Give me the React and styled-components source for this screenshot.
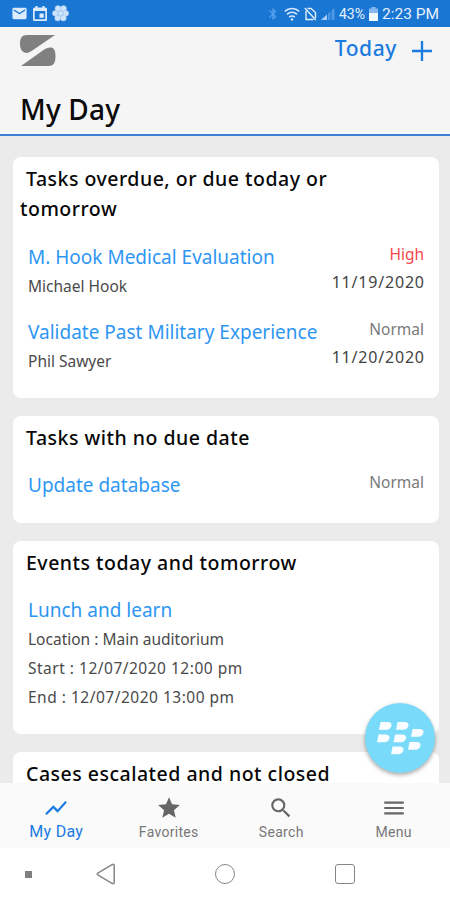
import styled, { createGlobalStyle } from "styled-components";
import {
  MdBluetooth,
  MdEmail,
  MdMenu,
  MdSearch,
  MdShowChart,
  MdStar,
} from "react-icons/md";

const cards = [
  {
    title: "Tasks overdue, or due today or tomorrow",
    items: [
      {
        name: "M. Hook Medical Evaluation",
        lines: ["Michael Hook"],
        priority: "High",
        date: "11/19/2020",
      },
      {
        name: "Validate Past Military Experience",
        lines: ["Phil Sawyer"],
        priority: "Normal",
        date: "11/20/2020",
      },
    ],
  },
  {
    title: "Tasks with no due date",
    items: [{ name: "Update database", lines: [], priority: "Normal" }],
  },
  {
    title: "Events today and tomorrow",
    items: [
      {
        name: "Lunch and learn",
        lines: [
          "Location : Main auditorium",
          "Start : 12/07/2020 12:00 pm",
          "End : 12/07/2020 13:00 pm",
        ],
      },
    ],
  },
  { title: "Cases escalated and not closed", items: [] },
];

const tabs = [
  { label: "My Day", icon: MdShowChart, active: true },
  { label: "Favorites", icon: MdStar },
  { label: "Search", icon: MdSearch },
  { label: "Menu", icon: MdMenu },
];

const CalendarIcon = () => (
  <svg width="14" height="15" viewBox="0 0 14 15">
    <path
      fillRule="evenodd"
      fill="#dcecff"
      d="M2.5 0h2v1.5h5V0h2v1.5h1A1.5 1.5 0 0 1 14 3v10.5a1.5 1.5 0 0 1-1.5 1.5h-11A1.5 1.5 0 0 1 0 13.5V3a1.5 1.5 0 0 1 1.5-1.5h1zM1.7 5v8.3h10.6V5zM6.5 7.5h4.3v4.3H6.5z"
    />
  </svg>
);

const FlowerIcon = () => (
  <svg width="17" height="17" viewBox="0 0 17 17">
    <g fill="#cfe4fb" stroke="#9cc6f4" strokeWidth="0.5">
      <circle cx="6" cy="3.6" r="3" />
      <circle cx="11.5" cy="3.6" r="3" />
      <circle cx="13.8" cy="8.3" r="2.9" />
      <circle cx="11.3" cy="13" r="3" />
      <circle cx="5.7" cy="13" r="3" />
      <circle cx="3.2" cy="8.3" r="2.8" />
      <circle cx="8.5" cy="8.3" r="2.6" />
    </g>
  </svg>
);

const WifiIcon = () => (
  <svg width="16" height="14" viewBox="0 0 16 14" fill="none" stroke="#d5e7fc">
    <g strokeWidth="1.6">
      <path d="M.8 4.3a10.5 10.5 0 0 1 14.4 0" />
      <path d="M3 7.3a7.3 7.3 0 0 1 10 0" />
      <path d="M5.2 10.2a4 4 0 0 1 5.6 0" />
    </g>
    <circle cx="8" cy="12.5" r="1.2" fill="#d5e7fc" stroke="none" />
  </svg>
);

const NoSimIcon = () => (
  <svg width="13" height="14" viewBox="0 0 13 14" fill="none" stroke="#e2effd">
    <path d="M3.5 1.5H7l4.5 4V11M9.5 12.5H2V4" strokeWidth="1.4" />
    <path d="M.8 1l11 12" strokeWidth="1.4" />
  </svg>
);

const SignalIcon = () => (
  <svg width="14" height="13" viewBox="0 0 14 13">
    <path d="M0 13l6-5.5V13z" fill="#a9cdf5" />
    <path d="M7 13V6.5l2.3-2V13zM10.5 13V3.5l3-2.5v12z" fill="#4c97e6" />
  </svg>
);

const BatteryIcon = () => (
  <svg width="9" height="14" viewBox="0 0 9 14">
    <path d="M2.5 0h4v1.5H9V14H0V1.5h2.5z" fill="#86b8f0" />
    <path d="M0 6h9v8H0z" fill="#f2f8ff" />
  </svg>
);

const LogoIcon = () => (
  <svg width="36" height="31" viewBox="0 0 36 31" fill="#808080">
    <path d="M7 0h28L12 15.8C9.5 17.5 7 18.5 4.5 17.5 1.5 16.5 0 13 0 9 0 3 2 0 7 0z" />
    <path d="M1 31l22.5-16c2.5-1.8 6-3.3 8.5-2.3 3 1 3.5 4.8 3.5 8.3 0 7-2 10-7 10z" />
  </svg>
);

const BerryIcon = () => (
  <svg width="48" height="34" viewBox="0 0 48 34">
    <defs>
      <path
        id="berry"
        d="M1.6 0h7.2C11.3 0 12.8 1.5 12.5 3.5 12.2 6 10 7.8 7.4 7.8H0z"
      />
    </defs>
    <g fill="#fafdff">
      <use href="#berry" x="3" y="1" />
      <use href="#berry" x="20" y="1" />
      <use href="#berry" x="1" y="13.5" />
      <use href="#berry" x="17.5" y="13.5" />
      <use href="#berry" x="35" y="8" />
      <use href="#berry" x="32" y="21" />
      <use href="#berry" x="15" y="25.5" />
    </g>
  </svg>
);

const App = () => (
  <Screen>
    <GlobalStyle />
    <StatusBar>
      <StatusGroup $gap={5}>
        <MdEmail size={17} color="#dcecff" />
        <CalendarIcon />
        <FlowerIcon />
      </StatusGroup>
      <StatusGroup $gap={4}>
        <MdBluetooth size={14} color="#5ca3ee" />
        <WifiIcon />
        <NoSimIcon />
        <SignalIcon />
        <Percent>43%</Percent>
        <BatteryIcon />
        <Clock>2:23 PM</Clock>
      </StatusGroup>
    </StatusBar>
    <Header>
      <HeaderTop>
        <LogoIcon />
        <Actions>
          <TodayButton>Today</TodayButton>
          <AddButton aria-label="Add">
            <svg width="22" height="22" viewBox="0 0 22 22">
              <path d="M11 1v20M1 11h20" stroke="#1a7be0" strokeWidth="2.3" />
            </svg>
          </AddButton>
        </Actions>
      </HeaderTop>
      <PageTitle>My Day</PageTitle>
    </Header>
    <Content>
      {cards.map((card) => (
        <Card key={card.title}>
          <CardTitle>{card.title}</CardTitle>
          <ItemList>
            {card.items.map((item) => (
              <Item key={item.name}>
                <Details>
                  <ItemLink>{item.name}</ItemLink>
                  {item.lines.map((line) => (
                    <Line key={line} $numeric={/\d/.test(line)}>
                      {line}
                    </Line>
                  ))}
                </Details>
                <Meta>
                  {item.priority && (
                    <Priority $high={item.priority === "High"}>
                      {item.priority}
                    </Priority>
                  )}
                  {item.date && <DueDate>{item.date}</DueDate>}
                </Meta>
              </Item>
            ))}
          </ItemList>
        </Card>
      ))}
      <Fab aria-label="Launcher">
        <BerryIcon />
      </Fab>
    </Content>
    <TabBar>
      {tabs.map(({ label, icon: Icon, active }) => (
        <Tab key={label} $active={active}>
          <Icon size={26} />
          <TabLabel $active={active}>{label}</TabLabel>
        </Tab>
      ))}
    </TabBar>
    <SystemNav>
      <Dot />
      <svg width="20" height="22" viewBox="0 0 20 22">
        <path
          d="M1.8 10.2L16 1.7q2.2-1 2.2 1v16.6q0 2-2.2 1L1.8 11.8q-1.2-.8 0-1.6z"
          fill="none"
          stroke="#858585"
          strokeWidth="1.5"
        />
      </svg>
      <HomeCircle />
      <RecentSquare />
    </SystemNav>
  </Screen>
);

const GlobalStyle = createGlobalStyle`
  * {
    box-sizing: border-box;
  }

  body {
    margin: 0;
    font-family: "Noto Sans", "Open Sans", sans-serif;
  }

  svg {
    display: block;
    flex-shrink: 0;
  }

  button {
    border: 0;
    padding: 0;
    background: none;
    font-family: inherit;
  }
`;

const Screen = styled.div`
  display: flex;
  flex-direction: column;
  width: 450px;
  height: 900px;
  overflow: hidden;
  background: #ebebeb;
`;

const StatusBar = styled.div`
  display: flex;
  flex-shrink: 0;
  justify-content: space-between;
  align-items: center;
  height: 27px;
  padding: 0 11px;
  background: #1976d2;
  color: #e6f1fd;
  font-family: Roboto, sans-serif;
`;

const StatusGroup = styled.div`
  display: flex;
  align-items: center;
  gap: ${(props) => props.$gap}px;
`;

const Percent = styled.span`
  font-size: 14px;
`;

const Clock = styled.span`
  font-size: 15.5px;
`;

const Header = styled.header`
  flex-shrink: 0;
  height: 109px;
  padding: 8px 17px 0 20px;
  background: #f5f5f5;
  border-bottom: 2px solid #3c7fd6;
`;

const HeaderTop = styled.div`
  display: flex;
  justify-content: space-between;
  height: 48px;
`;

const Actions = styled.div`
  display: flex;
  align-items: flex-start;
  gap: 14px;
`;

const TodayButton = styled.button`
  color: #1a7be0;
  font-size: 21px;
  font-weight: 500;
  letter-spacing: 0.6px;
  line-height: 26px;
`;

const AddButton = styled.button`
  padding-top: 5px;
`;

const PageTitle = styled.h1`
  margin: 0;
  color: #0a0a0a;
  font-size: 28px;
  font-weight: 500;
  letter-spacing: 0.2px;
  line-height: 52px;
`;

const Content = styled.main`
  position: relative;
  display: flex;
  flex: 1;
  flex-direction: column;
  gap: 18px;
  min-height: 0;
  padding: 21px 11px 0 13px;
  overflow: hidden;
`;

const Card = styled.section`
  flex-shrink: 0;
  padding: 7px 15px 22.4px 7px;
  border-radius: 8px;
  background: #fff;
`;

const CardTitle = styled.h2`
  margin: 0;
  padding-right: 60px;
  color: #080808;
  font-size: 19.5px;
  font-weight: 500;
  letter-spacing: 0.5px;
  line-height: 30px;
  text-indent: 6px;
`;

const ItemList = styled.div`
  display: flex;
  flex-direction: column;
  gap: 16.3px;
  padding: 17.6px 0 0 8px;
`;

const Item = styled.div`
  display: flex;
  justify-content: space-between;
`;

const Details = styled.div`
  display: flex;
  flex-direction: column;
`;

const ItemLink = styled.a`
  color: #2e96f3;
  font-size: 19px;
  line-height: 30px;
  white-space: nowrap;
`;

const Line = styled.span`
  color: #4a4a4a;
  font-size: 15.5px;
  letter-spacing: ${(props) => (props.$numeric ? 0.5 : 0)}px;
  line-height: 28.7px;
`;

const Meta = styled.div`
  display: flex;
  flex-direction: column;
  align-items: flex-end;
  line-height: 28px;
  margin-top: -2px;
`;

const Priority = styled.span`
  color: ${(props) => (props.$high ? "#f5484c" : "#7a7a7a")};
  font-size: 15.5px;
`;

const DueDate = styled.span`
  color: #444;
  font-size: 16px;
  letter-spacing: 0.8px;
  margin-right: -0.8px;
`;

const Fab = styled.button`
  position: absolute;
  right: 15px;
  bottom: 10px;
  display: flex;
  align-items: center;
  justify-content: center;
  width: 70px;
  height: 70px;
  border-radius: 50%;
  background: #79daf9;
  box-shadow: 0 2px 4px rgba(0, 0, 0, 0.35);
`;

const TabBar = styled.nav`
  display: flex;
  flex-shrink: 0;
  height: 65px;
  background: #fafafa;
`;

const Tab = styled.div`
  display: flex;
  flex: 1;
  flex-direction: column;
  align-items: center;
  padding-top: 12px;
  color: ${(props) => (props.$active ? "#1a7be0" : "#666")};
`;

const TabLabel = styled.span`
  color: ${(props) => (props.$active ? "#1a7be0" : "#777")};
  font-family: Roboto, sans-serif;
  font-size: ${(props) => (props.$active ? 16 : 14)}px;
  letter-spacing: 0.3px;
  line-height: 22px;
`;

const SystemNav = styled.div`
  display: flex;
  flex-shrink: 0;
  align-items: center;
  height: 52px;
  padding-left: 25px;
  background: #fff;
`;

const Dot = styled.span`
  width: 7px;
  height: 7px;
  margin-right: 64px;
  background: #808080;
`;

const HomeCircle = styled.span`
  width: 20px;
  height: 20px;
  margin: 0 100px 0 99px;
  border: 1.5px solid #858585;
  border-radius: 50%;
`;

const RecentSquare = styled.span`
  width: 20px;
  height: 20px;
  border: 1.5px solid #858585;
  border-radius: 3px;
`;

export default App;
